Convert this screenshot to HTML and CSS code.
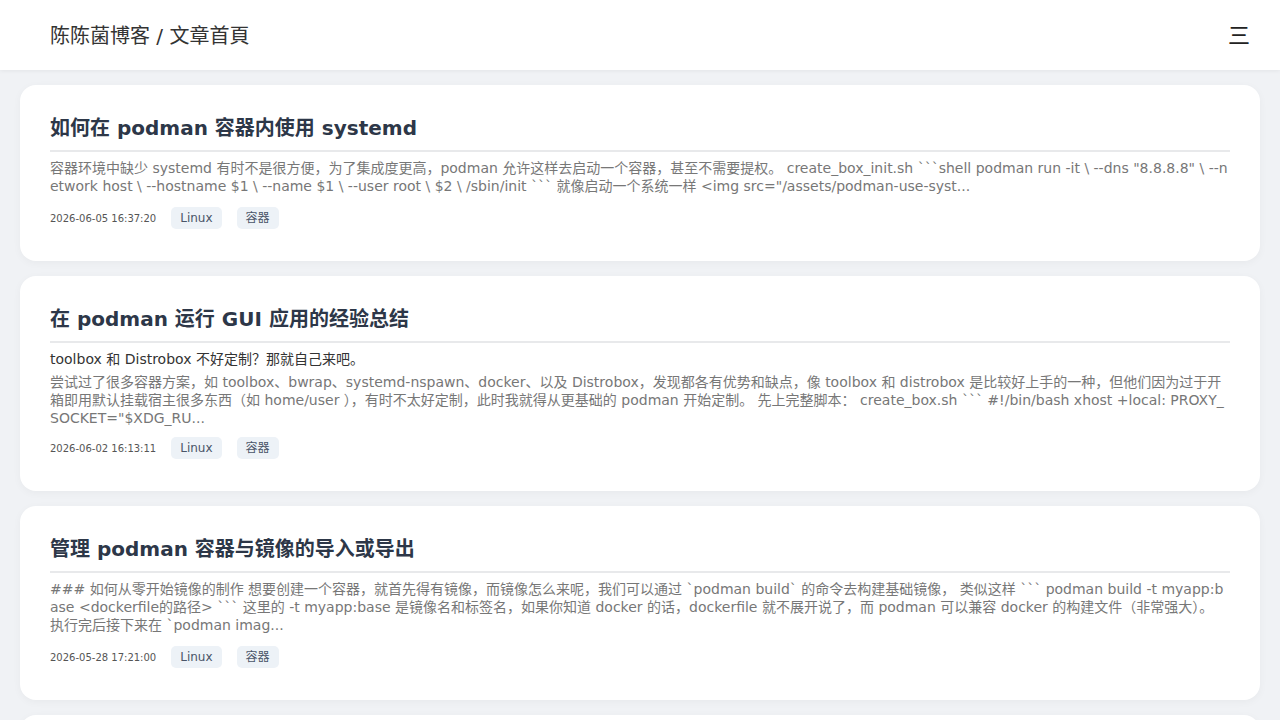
FILE: index.html
```html
<!DOCTYPE html>
<html lang="zh-CN">
<head>
<meta charset="utf-8">
<title>陈陈菌博客 / 文章首頁</title>
<link rel="stylesheet" href="styles.css">
</head>
<body>
<header class="topbar">
  <div class="site-title">陈陈菌博客 / 文章首頁</div>
  <div class="menu-btn">三</div>
</header>
<main class="list">
  <article class="card">
    <h2 class="card-title">如何在 podman 容器内使用 systemd</h2>
    <p class="desc">容器环境中缺少 systemd 有时不是很方便，为了集成度更高，podman 允许这样去启动一个容器，甚至不需要提权。 create_box_init.sh ```shell podman run -it \ --dns "8.8.8.8" \ --network host \ --hostname $1 \ --name $1 \ --user root \ $2 \ /sbin/init ``` 就像启动一个系统一样 &lt;img src="/assets/podman-use-syst...</p>
    <div class="meta">
      <span class="date">2026-06-05 16:37:20</span>
      <span class="tag">Linux</span>
      <span class="tag">容器</span>
    </div>
  </article>
  <article class="card">
    <h2 class="card-title">在 podman 运行 GUI 应用的经验总结</h2>
    <p class="subtitle">toolbox 和 Distrobox 不好定制？那就自己来吧。</p>
    <p class="desc tight">尝试过了很多容器方案，如 toolbox、bwrap、systemd-nspawn、docker、以及 Distrobox，发现都各有优势和缺点，像 toolbox 和 distrobox 是比较好上手的一种，但他们因为过于开箱即用默认挂载宿主很多东西（如 home/user ），有时不太好定制，此时我就得从更基础的 podman 开始定制。 先上完整脚本： create_box.sh ``` #!/bin/bash xhost +local: PROXY_SOCKET="$XDG_RU...</p>
    <div class="meta meta-tight">
      <span class="date">2026-06-02 16:13:11</span>
      <span class="tag">Linux</span>
      <span class="tag">容器</span>
    </div>
  </article>
  <article class="card">
    <h2 class="card-title">管理 podman 容器与镜像的导入或导出</h2>
    <p class="desc">### 如何从零开始镜像的制作 想要创建一个容器，就首先得有镜像，而镜像怎么来呢，我们可以通过 `podman build` 的命令去构建基础镜像， 类似这样 ``` podman build -t myapp:base &lt;dockerfile的路径&gt; ``` 这里的 -t myapp:base 是镜像名和标签名，如果你知道 docker 的话，dockerfile 就不展开说了，而 podman 可以兼容 docker 的构建文件（非常强大）。 执行完后接下来在 `podman imag...</p>
    <div class="meta">
      <span class="date">2026-05-28 17:21:00</span>
      <span class="tag">Linux</span>
      <span class="tag">容器</span>
    </div>
  </article>
  <article class="card card-peek" aria-hidden="true"></article>
</main>
</body>
</html>
```
FILE: styles.css
```css
* { box-sizing: border-box; }
html, body { margin: 0; padding: 0; }
body {
  background: #f0f2f5;
  font-family: "DejaVu Sans", "Noto Sans CJK SC", sans-serif;
  color: #333;
}
.topbar {
  height: 70px;
  background: #fff;
  display: flex;
  align-items: center;
  justify-content: space-between;
  padding: 0 30px 0 50px;
  box-shadow: 0 1px 4px rgba(0,0,0,0.06);
}
.site-title {
  font-size: 20px;
  color: #333;
  line-height: 28px;
  padding-top: 2px;
}
.menu-btn {
  font-family: "Noto Sans CJK SC", sans-serif;
  font-size: 22px;
  line-height: 28px;
  color: #222;
  width: 22px;
  text-align: center;
  padding-bottom: 5px;
}
.list {
  padding: 15px 20px;
  display: flex;
  flex-direction: column;
  gap: 15px;
}
.card {
  background: #fff;
  border-radius: 16px;
  padding: 30px 30px 32px;
  box-shadow: 0 2px 8px rgba(0,0,0,0.04);
}
.card-peek { height: 120px; }
.card-title {
  margin: 0;
  font-size: 20px;
  line-height: 26px;
  font-weight: bold;
  color: #2d3748;
  padding-bottom: 9px;
  border-bottom: 2px solid #e8e9eb;
}
.subtitle {
  margin: 7px 0 0;
  font-size: 14px;
  line-height: 18px;
  color: #333;
}
.desc {
  margin: 7px 0 0;
  font-size: 14px;
  line-height: 18px;
  color: #777;
  word-break: break-all;
}
.desc.tight { margin-top: 5px; }
.meta {
  margin-top: 12px;
  display: flex;
  align-items: center;
  gap: 15px;
  height: 22px;
}
.meta.meta-tight { margin-top: 10px; }
.date {
  font-size: 10px;
  color: #555;
}
.tag {
  display: inline-block;
  height: 22px;
  line-height: 22px;
  padding: 0 9px;
  font-size: 12px;
  color: #4a5568;
  background: #edf2f7;
  border-radius: 5px;
}
```
